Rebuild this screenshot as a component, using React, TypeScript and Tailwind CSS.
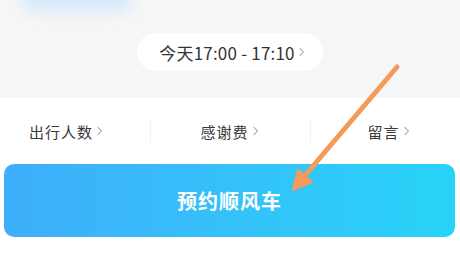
import React from "react";

const Chevron = () => (
  <svg width="6" height="10" viewBox="0 0 6 10" className="ml-[4px]" fill="none">
    <path d="M1 1.5 L4.5 5 L1 8.5" stroke="#b8b8b8" strokeWidth="1.2" strokeLinecap="round" strokeLinejoin="round" />
  </svg>
);

export default function App() {
  const font = { fontFamily: '"Noto Sans CJK SC", "Noto Sans", sans-serif' };
  return (
    <div className="relative w-[460px] h-[253px] overflow-hidden bg-white" style={font}>
      <div className="relative h-[98px] bg-[#f6f6f7] flex justify-center pt-[33px]">
        <div className="absolute left-[22px] top-[-16px] w-[110px] h-[28px] rounded-full bg-[#d6eafa] blur-[7px]" />
        <div className="w-[186px] h-[38px] rounded-full bg-white flex items-center justify-center text-[17px] text-[#333] leading-none pl-[4px]">
          <span className="tracking-[0.2px]">今天17:00 - 17:10</span>
          <Chevron />
        </div>
      </div>
      <div className="h-[66px] flex items-center text-[15px] text-[#3a3a3a] leading-none tracking-[1px]">
        <div className="w-[150px] flex items-center justify-center pr-[18px]">
          <span>出行人数</span>
          <Chevron />
        </div>
        <div className="w-px h-[24px] bg-[#f0f0f0]" />
        <div className="flex-1 flex items-center justify-center pr-[2px]">
          <span>感谢费</span>
          <Chevron />
        </div>
        <div className="w-px h-[24px] bg-[#f0f0f0]" />
        <div className="w-[149px] flex items-center justify-center pl-[6px]">
          <span>留言</span>
          <Chevron />
        </div>
      </div>
      <div className="px-[4px] pr-[5px]">
        <div className="h-[73px] rounded-[10px] bg-gradient-to-r from-[#3eaefa] to-[#27d3f8] flex items-center justify-center text-white text-[20px] font-bold tracking-[1px]">
          预约顺风车
        </div>
      </div>
      <svg className="absolute left-0 top-0 pointer-events-none" width="460" height="253" viewBox="0 0 460 253">
        <line x1="397" y1="67" x2="302" y2="179" stroke="#f49b5b" strokeWidth="5" strokeLinecap="round" />
        <polygon points="293,190 312,182 298,170" fill="#f49b5b" stroke="#f49b5b" strokeWidth="2" strokeLinejoin="round" />
      </svg>
    </div>
  );
}
